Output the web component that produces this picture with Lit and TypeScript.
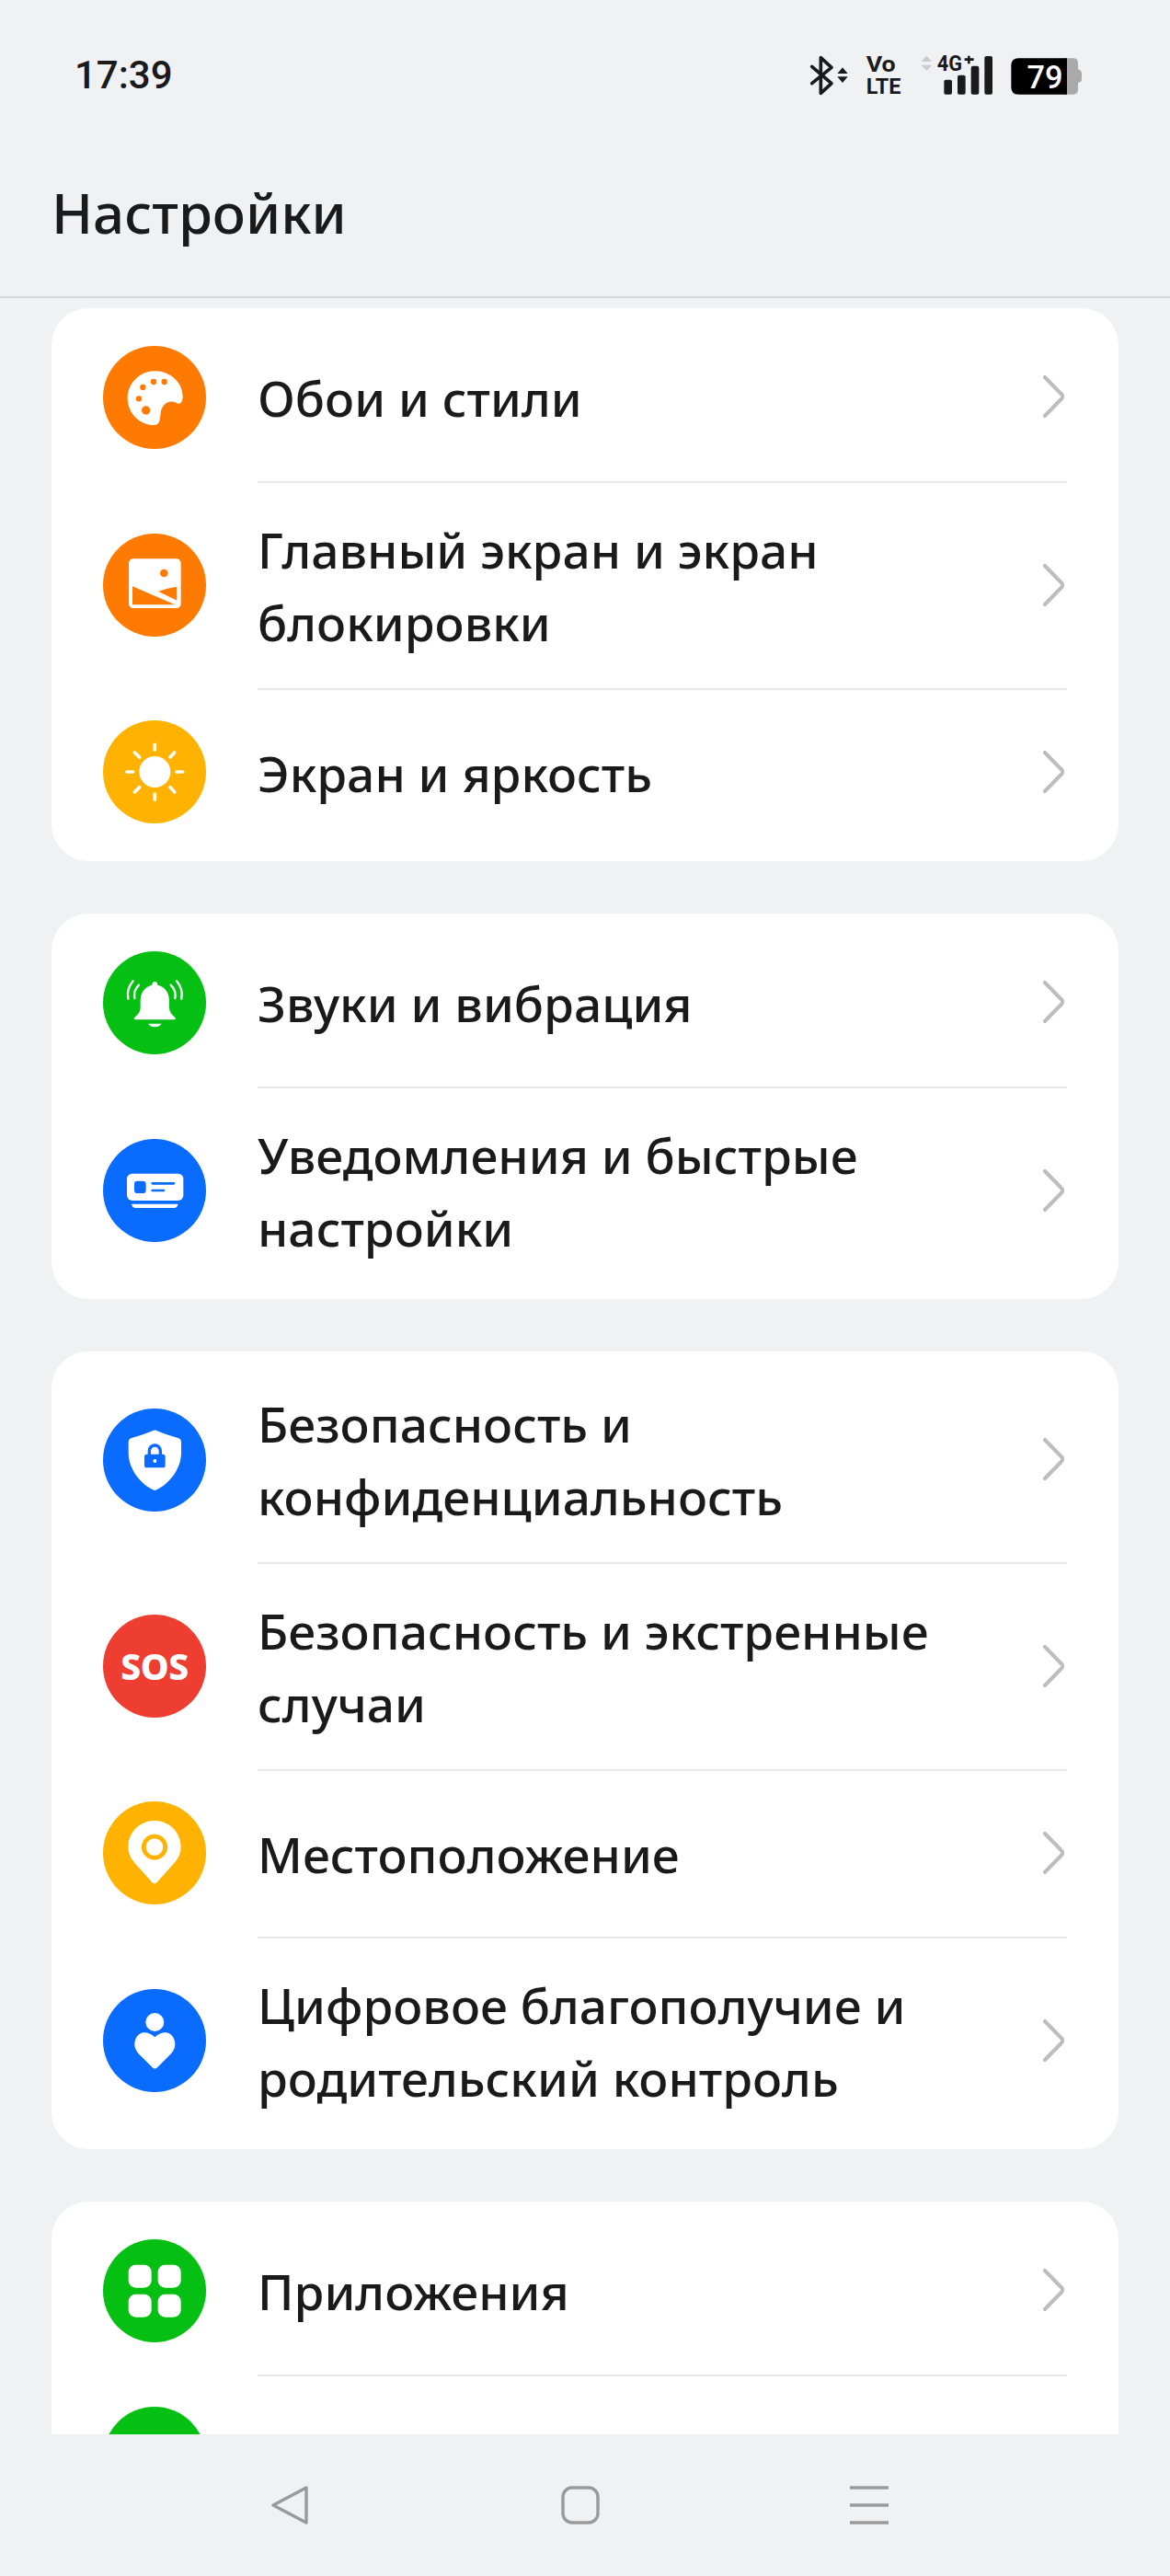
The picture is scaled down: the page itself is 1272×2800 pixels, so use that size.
import {LitElement, html, css, svg, nothing} from 'lit';
import {customElement} from 'lit/decorators.js';

const W = '#fff';
const ORANGE = '#ff7a00';
const YELLOW = '#ffb300';
const GREEN = '#05bf12';
const BLUE = '#0a6bff';

// icons are drawn in the coordinates of a 336 wide box, circle comes from css
const palette = svg`
  <path fill="${W}" d="M235 132C285 132 325 170 325 215C325 232 318 240 308 238C290 226 268 232 258 252C252 262 254 272 250 290C248 302 242 308 232 308C183 308 145 268 145 220C145 172 185 132 235 132Z"/>
  <g fill="${ORANGE}"><circle cx="195" cy="185" r="9.5"/><circle cx="230" cy="167" r="9.5"/><circle cx="265" cy="167" r="9.5"/><circle cx="182" cy="222" r="9.5"/><circle cx="205" cy="260" r="14"/></g>`;
const picture = svg`
  <rect x="149" y="142" width="170" height="161" rx="14" fill="${W}"/>
  <circle cx="264" cy="189" r="13" fill="${ORANGE}"/>
  <path fill="${ORANGE}" d="M161 232L300 292L161 292Z"/>
  <path fill="${ORANGE}" d="M243 250C262 242 285 236 306 233V282Z"/>
  <path fill="none" stroke="${W}" stroke-width="7" d="M232 246L310 284"/>`;
const sun = svg`
  <circle cx="234" cy="206" r="51" fill="${W}"/>
  <g stroke="${W}" stroke-width="11" stroke-linecap="round">
    <path d="M234 117V134M234 278V297M143 206H163M305 206H325M168 143L184 158M298 143L284 158M168 272L184 256M298 272L284 256"/>
  </g>`;
const bell = svg`
  <path fill="${W}" d="M234 143C240 143 243 148 243 154C270 160 281 182 281 205V228C281 245 295 255 302 262Q302 267 296 267H172Q166 267 166 262C173 255 187 245 187 228V205C187 182 198 160 225 154C225 148 228 143 234 143Z"/>
  <path fill="${W}" d="M212 280H256C248 294 220 294 212 280Z"/>
  <g fill="none" stroke="${W}" stroke-width="7" stroke-linecap="round">
    <path d="M147 199C143 176 150 156 163 141M168 197C165 182 170 166 182 154M321 199C325 176 318 156 305 141M300 197C303 182 298 166 286 154"/>
  </g>`;
const card = svg`
  <rect x="143" y="166" width="184" height="88" rx="17" fill="${W}"/>
  <rect x="167" y="190" width="38" height="40" rx="10" fill="${BLUE}"/>
  <path stroke="${BLUE}" stroke-width="8" stroke-linecap="round" d="M226 198H296M226 221H263"/>
  <path fill="${W}" d="M158 265H310C308 273 304 278 296 278H172C164 278 160 273 158 265Z"/>`;
const shield = svg`
  <path fill="${W}" d="M234 135C262 146 290 156 312 162Q320 165 320 173V210C320 265 275 318 234 332C193 318 148 265 148 210V173Q148 165 156 162C178 156 206 146 234 135Z"/>
  <rect x="200" y="214" width="68" height="44" rx="8" fill="${BLUE}"/>
  <path fill="none" stroke="${BLUE}" stroke-width="10" d="M216 218V203A18 18 0 0 1 252 203V218"/>
  <circle cx="234" cy="236" r="6" fill="${W}"/>`;
const pin = svg`
  <path fill="${W}" d="M233 119C281 119 319 157 319 205C319 235 300 254 284 272L241 320Q233 328 225 320L182 272C166 254 147 235 147 205C147 157 185 119 233 119Z"/>
  <circle cx="233" cy="205" r="35" fill="${W}" stroke="${YELLOW}" stroke-width="14"/>`;
const person = svg`
  <circle cx="234" cy="173" r="30" fill="${W}"/>
  <path fill="${W}" d="M234 222C222 210 208 206 197 207C179 210 168 226 168 245C168 264 180 275 190 285L226 321Q234 328 242 321L278 285C288 275 300 264 300 245C300 226 289 210 271 207C260 206 246 210 234 222Z"/>`;
const grid = svg`
  <g fill="${W}">
    <rect x="83" y="83" width="75" height="75" rx="24"/><rect x="179" y="83" width="75" height="75" rx="24"/>
    <rect x="83" y="179" width="75" height="75" rx="24"/><rect x="179" y="179" width="75" height="75" rx="24"/>
  </g>`;

interface Row {
  label: string;
  color: string;
  icon?: unknown;
  box?: string;
  sos?: boolean;
}

const groups: Row[][] = [
  [
    {label: 'Обои и стили', color: ORANGE, icon: palette, box: '65 50 336 336'},
    {label: 'Главный экран и экран блокировки', color: ORANGE, icon: picture, box: '65 60 336 336'},
    {label: 'Экран и яркость', color: YELLOW, icon: sun, box: '65 38 336 336'},
  ],
  [
    {label: 'Звуки и вибрация', color: GREEN, icon: bell, box: '65 44 336 336'},
    {label: 'Уведомления и быстрые настройки', color: BLUE, icon: card, box: '65 53 336 336'},
  ],
  [
    {label: 'Безопасность и конфиденциальность', color: BLUE, icon: shield, box: '65 65 336 336'},
    {label: 'Безопасность и экстренные случаи', color: '#ee3e32', sos: true},
    {label: 'Местоположение', color: YELLOW, icon: pin, box: '65 56 336 336'},
    {label: 'Цифровое благополучие и родительский контроль', color: BLUE, icon: person, box: '65 65 336 336'},
  ],
  [
    {label: 'Приложения', color: GREEN, icon: grid, box: '0 0 336 336'},
    // only the top of this row shows above the nav bar
    {label: '', color: GREEN},
  ],
];

@customElement('app-root')
export class AppRoot extends LitElement {
  static styles = css`
    :host {
      display: flex;
      flex-direction: column;
      height: 2800px;
      background: #f0f1f3;
      color: #1a1a1a;
      font-family: "Noto Sans", sans-serif;
    }
    .status {
      display: flex;
      justify-content: space-between;
      align-items: center;
      height: 90px;
      padding: 40px 72px 0 81px;
      flex: none;
    }
    .time {
      font-size: 42px;
      font-weight: 500;
      font-family: Roboto, sans-serif;
      margin-top: -8px;
    }
    .status svg {
      display: block;
      width: 360px;
      height: 90px;
    }
    .status text {
      font-family: Roboto, sans-serif;
      font-weight: 700;
      fill: #1a1a1a;
    }
    .status text.pct {
      fill: #fff;
      font-weight: 500;
    }
    h1 {
      flex: none;
      margin: 0;
      height: 194px;
      box-sizing: border-box;
      padding: 57px 0 0 56px;
      border-bottom: 2px solid #d6d7d9;
      font-size: 60px;
      line-height: 88px;
      font-weight: 500;
    }
    .list {
      flex: 1;
      overflow: hidden;
      padding: 11px 56px 0;
      display: flex;
      flex-direction: column;
      gap: 57px;
    }
    .group {
      flex: none;
      background: #fff;
      border-radius: 40px;
      padding: 6px 56px;
    }
    .row {
      display: flex;
      align-items: center;
      gap: 56px;
      min-height: 182px;
    }
    .row + .row .body {
      border-top: 2px solid #e9e9ea;
    }
    .circle {
      flex: none;
      width: 112px;
      height: 112px;
      border-radius: 50%;
      display: flex;
      align-items: center;
      justify-content: center;
    }
    .circle svg {
      display: block;
      width: 112px;
      height: 112px;
    }
    .sos {
      color: #fff;
      font-size: 39px;
      font-weight: 800;
      letter-spacing: -0.5px;
    }
    .body {
      flex: 1;
      align-self: stretch;
      display: flex;
      align-items: center;
      justify-content: space-between;
      min-width: 0;
      box-sizing: border-box;
    }
    .label {
      width: 790px;
      font-size: 53.3px;
      line-height: 79px;
      font-weight: 500;
      padding: 32.5px 0;
    }
    .chev {
      flex: none;
      width: 24px;
      height: 46px;
      margin: -2px 3px 0 0;
    }
    .nav {
      flex: none;
      height: 154px;
      display: grid;
      grid-template-columns: 42px 42px 42px;
      justify-content: space-between;
      align-items: center;
      padding: 0 306px 0 295px;
      box-sizing: border-box;
    }
    .nav svg {
      display: block;
      width: 42px;
      height: 42px;
    }
  `;

  renderStatus() {
    return html`<svg viewBox="0 0 1080 270">
      <path fill="none" stroke="#1a1a1a" stroke-width="11" stroke-linecap="round" stroke-linejoin="round" d="M128 97L192 152L157 184V68L192 100L128 152"/>
      <path fill="#1a1a1a" d="M228 100L245 120H211ZM228 150L211 130H245Z"/>
      <text x="305" y="115" font-size="70" textLength="96" lengthAdjust="spacingAndGlyphs">Vo</text>
      <text x="305" y="187" font-size="72" textLength="113" lengthAdjust="spacingAndGlyphs">LTE</text>
      <path fill="#ccc" d="M502 62L520 81H484ZM502 111L484 92H520Z"/>
      <text x="536" y="112" font-size="70" textLength="82" lengthAdjust="spacingAndGlyphs">4G</text>
      <path stroke="#1a1a1a" stroke-width="8" d="M640 62V88M626 74H656"/>
      <g fill="#1a1a1a">
        <rect x="559" y="140" width="26" height="48" rx="6"/>
        <rect x="603" y="125" width="26" height="63" rx="6"/>
        <rect x="647" y="95" width="26" height="93" rx="6"/>
        <rect x="691" y="63" width="26" height="125" rx="6"/>
      </g>
      <path fill="#aaa" d="M950 70H980Q996 70 996 86V106Q1008 110 1008 120V138Q1008 148 996 150V172Q996 188 980 188H950Z"/>
      <path fill="#000" d="M802 70H960V188H802Q778 188 778 164V94Q778 70 802 70Z"/>
      <text class="pct" x="888" y="168" font-size="103" text-anchor="middle">79</text>
    </svg>`;
  }

  renderRow(r: Row) {
    return html`<div class="row">
      <div class="circle" style="background:${r.color}">
        ${r.sos ? html`<span class="sos">SOS</span>` : nothing}
        ${r.icon ? html`<svg viewBox="${r.box}">${r.icon}</svg>` : nothing}
      </div>
      <div class="body">
        ${r.label
          ? html`<div class="label">${r.label}</div>
              <svg class="chev" viewBox="0 0 24 46">
                <path fill="none" stroke="#bdbdbd" stroke-width="4" stroke-linecap="round" stroke-linejoin="round" d="M3 2L21.5 21Q23 23 21.5 25L3 44"/>
              </svg>`
          : nothing}
      </div>
    </div>`;
  }

  render() {
    return html`
      <div class="status">
        <div class="time">17:39</div>
        ${this.renderStatus()}
      </div>
      <h1>Настройки</h1>
      <div class="list">
        ${groups.map(g => html`<div class="group">${g.map(r => this.renderRow(r))}</div>`)}
      </div>
      <div class="nav">
        <svg viewBox="0 0 42 42"><path fill="none" stroke="#9a9a9a" stroke-width="3.4" stroke-linejoin="round" d="M38 2V40L2 21Z"/></svg>
        <svg viewBox="0 0 42 42"><rect x="2" y="2" width="38" height="38" rx="10" fill="none" stroke="#9a9a9a" stroke-width="3.4"/></svg>
        <svg viewBox="0 0 42 42"><path stroke="#9a9a9a" stroke-width="3.6" d="M0 2H42M0 21H42M0 40H42"/></svg>
      </div>
    `;
  }
}
